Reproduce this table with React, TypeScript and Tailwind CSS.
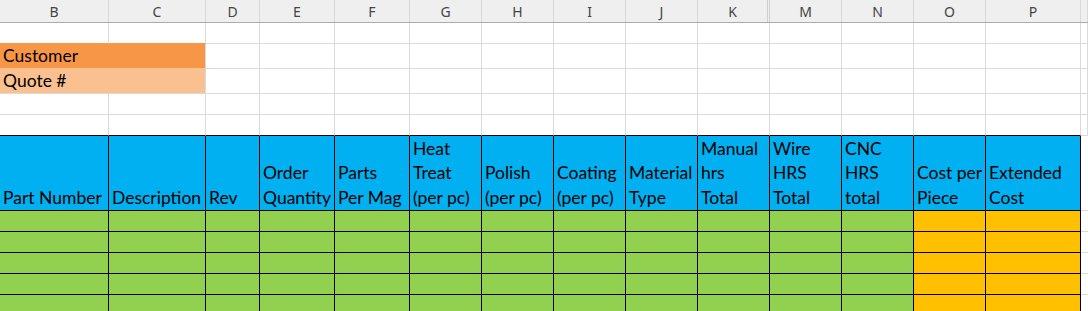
import React from 'react';

const letters = ['B', 'C', 'D', 'E', 'F', 'G', 'H', 'I', 'J', 'K', 'M', 'N', 'O', 'P', ''];

const headings: string[][] = [
  ['Part Number'],
  ['Description'],
  ['Rev'],
  ['Order', 'Quantity'],
  ['Parts', 'Per Mag'],
  ['Heat', 'Treat', '(per pc)'],
  ['Polish', '(per pc)'],
  ['Coating', '(per pc)'],
  ['Material', 'Type'],
  ['Manual', 'hrs', 'Total'],
  ['Wire', 'HRS', 'Total'],
  ['CNC', 'HRS', 'total'],
  ['Cost per', 'Piece'],
  ['Extended', 'Cost'],
];

const gridCols = 'grid grid-cols-[109px_97px_54px_75px_75px_72px_72px_72px_72px_72px_72px_72px_72px_95px_1fr]';
const cellFont = "font-['Lato',_'Carlito',_sans-serif] text-[17.5px] text-black";

// plain empty row of gridlines; `edge` makes the bottom line black under the table columns
const BlankRow: React.FC<{ h: string; edge?: boolean }> = ({ h, edge }) => (
  <div className={`${gridCols} ${h}`}>
    {letters.map((l, i) => (
      <div
        key={i}
        className={`border-r border-b border-r-[#dadada] ${
          edge && i < 14 ? 'border-b-black' : 'border-b-[#dadada]'
        }`}
      />
    ))}
  </div>
);

const DataRow: React.FC = () => (
  <div className={`${gridCols} h-[21px]`}>
    {letters.map((l, i) => {
      if (i === 14) return <div key={i} className="border-b border-[#dadada]" />;
      const bg = i >= 12 ? 'bg-[#ffc000]' : 'bg-[#92d050]';
      return <div key={i} className={`${bg} border-r border-b border-black`} />;
    })}
  </div>
);

export default function App() {
  return (
    <div className="w-[1088px] h-[311px] overflow-hidden bg-white">
      {/* column letters */}
      <div className={`${gridCols} h-[23px] bg-[#efefef] border-b border-[#ababab]`}>
        {letters.map((l, i) => (
          <div
            key={i}
            className={`flex items-center justify-center font-['Segoe_UI',_'Noto_Sans',_sans-serif] text-[14px] text-[#444] ${
              i === 9 ? 'border-r-[3px] border-double border-[#d0d0d0]' : 'border-r border-[#d8d8d8]'
            }`}
          >
            {l}
          </div>
        ))}
      </div>

      {/* row 1 */}
      <div className={`${gridCols} h-[21px]`}>
        {letters.map((l, i) => (
          <div
            key={i}
            className={`border-r border-r-[#dadada] border-b ${i < 2 ? 'border-b-[#f79646]' : 'border-b-[#dadada]'}`}
          />
        ))}
      </div>

      {/* customer / quote */}
      {[
        { label: 'Customer', bg: 'bg-[#f79646]', line: 'border-b-[#fac090]' },
        { label: 'Quote #', bg: 'bg-[#fac090]', line: 'border-b-[#dadada]' },
      ].map((r) => (
        <div key={r.label} className={`${gridCols} h-[25px]`}>
          <div className={`col-span-2 ${r.bg} border-b ${r.line} border-r border-r-[#dadada] flex items-end pl-[3px] ${cellFont} leading-[24px]`}>
            {r.label}
          </div>
          {letters.slice(2).map((l, i) => (
            <div key={i} className="border-r border-b border-[#dadada]" />
          ))}
        </div>
      ))}

      <BlankRow h="h-[21px]" />
      <BlankRow h="h-[21px]" edge />

      {/* table heading */}
      <div className={`${gridCols} h-[75px]`}>
        {headings.map((lines, i) => (
          <div
            key={i}
            className={`bg-[#00b0f0] border-r border-b border-black flex flex-col justify-end pl-[3px] overflow-hidden whitespace-nowrap ${cellFont} leading-[24.5px]`}
          >
            {lines.map((t) => (
              <span key={t}>{t}</span>
            ))}
          </div>
        ))}
        <div className="border-b border-[#dadada]" />
      </div>

      <DataRow />
      <DataRow />
      <DataRow />
      <DataRow />
      <DataRow />
    </div>
  );
}
